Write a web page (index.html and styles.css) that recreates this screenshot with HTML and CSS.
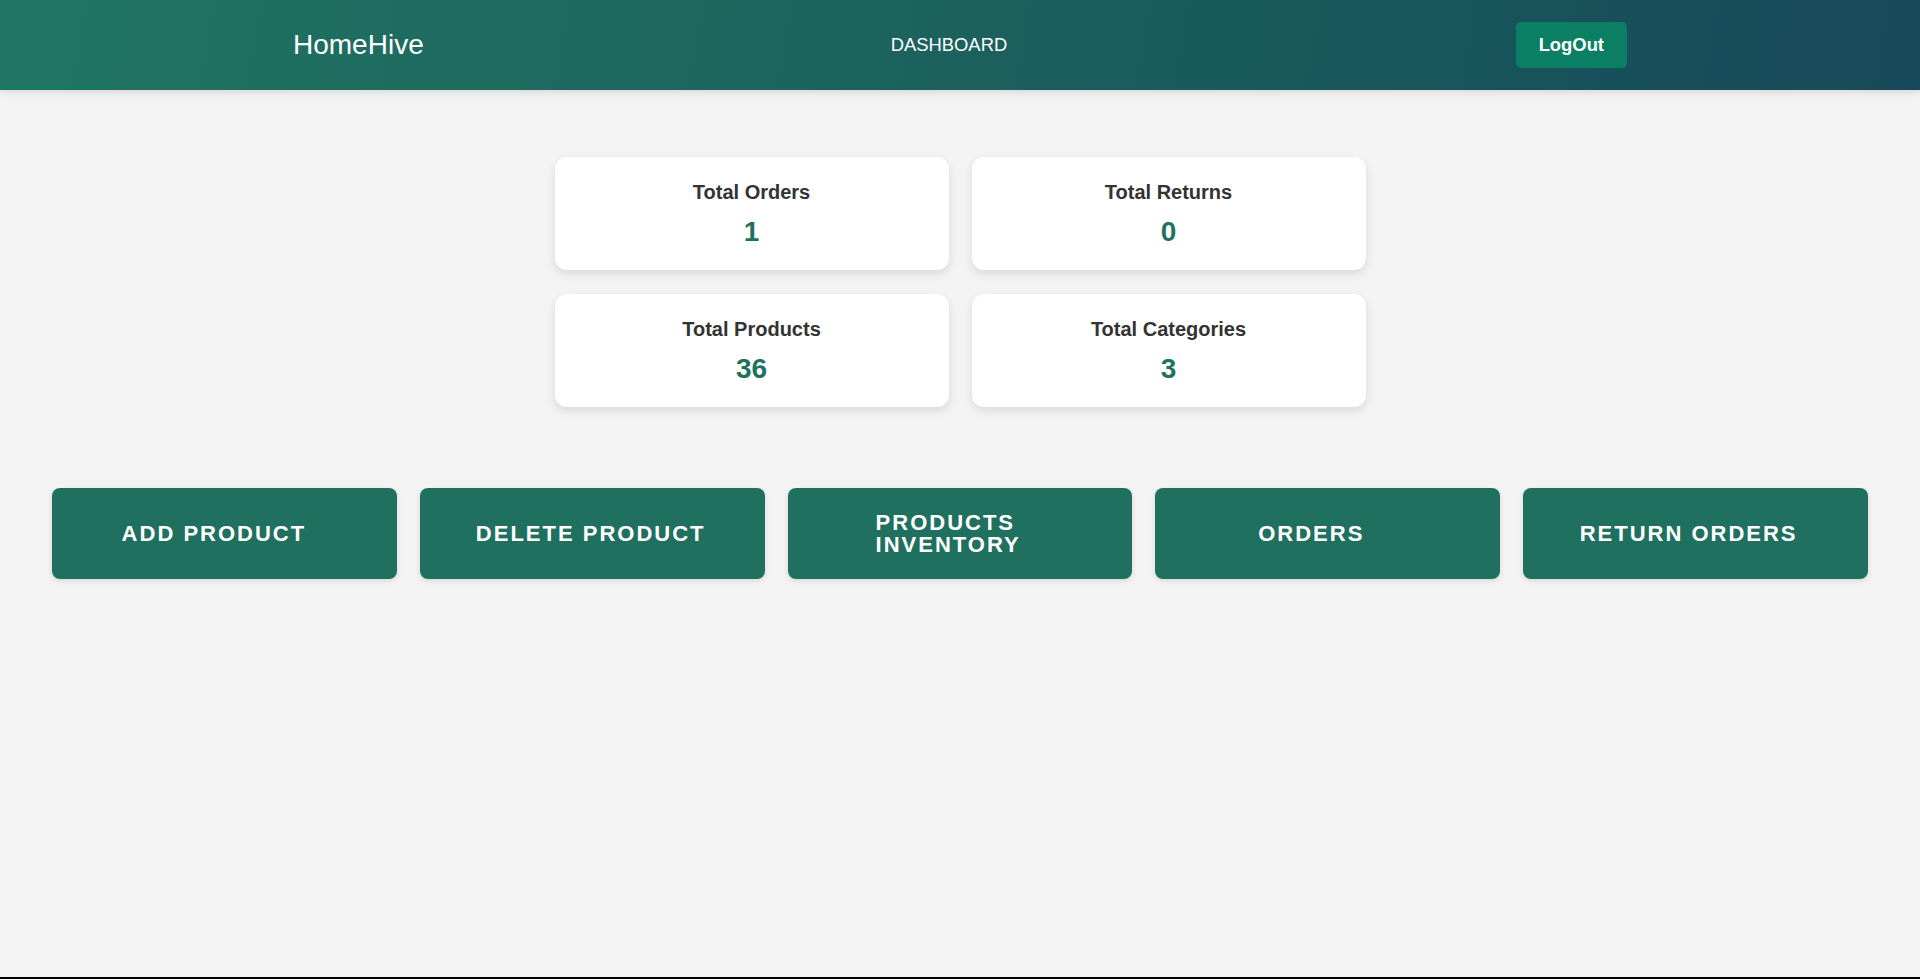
FILE: index.html
```html
<!DOCTYPE html>
<html lang="en">
<head>
<meta charset="utf-8">
<title>HomeHive Admin Dashboard</title>
<link rel="stylesheet" href="styles.css">
</head>
<body>
<div class="page">
  <header class="topbar">
    <div class="brand">HomeHive</div>
    <nav class="nav"><a class="nav-link" href="#">DASHBOARD</a></nav>
    <button class="logout" type="button">LogOut</button>
  </header>

  <main class="main">
    <section class="stats">
      <div class="stat-card">
        <h3 class="stat-title">Total Orders</h3>
        <p class="stat-value">1</p>
      </div>
      <div class="stat-card">
        <h3 class="stat-title">Total Returns</h3>
        <p class="stat-value">0</p>
      </div>
      <div class="stat-card">
        <h3 class="stat-title">Total Products</h3>
        <p class="stat-value">36</p>
      </div>
      <div class="stat-card">
        <h3 class="stat-title">Total Categories</h3>
        <p class="stat-value">3</p>
      </div>
    </section>

    <section class="actions">
      <a class="action action--add" href="#"><span class="action-label">ADD PRODUCT</span></a>
      <a class="action action--delete" href="#"><span class="action-label">DELETE PRODUCT</span></a>
      <a class="action action--inventory" href="#"><span class="action-label">PRODUCTS INVENTORY</span></a>
      <a class="action action--orders" href="#"><span class="action-label">ORDERS</span></a>
      <a class="action action--returns" href="#"><span class="action-label">RETURN ORDERS</span></a>
    </section>
  </main>

  <footer class="footer"></footer>
</div>
</body>
</html>
```

FILE: styles.css
```css
* {
  box-sizing: border-box;
}

html, body {
  margin: 0;
  padding: 0;
}

body {
  background: #f3f3f3;
  font-family: "Liberation Sans", Arial, Helvetica, sans-serif;
  color: #333;
}

.page {
  min-height: 100vh;
  display: flex;
  flex-direction: column;
}

/* Header */
.topbar {
  height: 90px;
  display: flex;
  align-items: center;
  padding: 0 293px 0 293px;
  background: linear-gradient(100deg, #1f7562 0%, #1d655e 40%, #195a5c 65%, #174859 100%);
  box-shadow: 0 2px 8px rgba(0, 0, 0, 0.12);
  color: #fff;
}

.brand {
  font-size: 28px;
  line-height: 1.15;
  color: #fff;
}

.nav {
  margin-left: 467px;
}

.nav-link {
  color: #fff;
  text-decoration: none;
  font-size: 18.4px;
  line-height: 1.15;
}

.logout {
  margin-left: auto;
  background: #0b7f64;
  color: #fff;
  border: none;
  border-radius: 5px;
  padding: 12px 23px;
  font-family: inherit;
  font-size: 18.4px;
  font-weight: bold;
  line-height: 1.15;
  cursor: pointer;
}

/* Main */
.main {
  flex: 1;
}

.stats {
  display: grid;
  grid-template-columns: repeat(2, 394px);
  gap: 24px 23px;
  justify-content: center;
  margin-top: 67px;
}

.stat-card {
  background: #fff;
  border-radius: 12px;
  box-shadow: 0 4px 10px rgba(0, 0, 0, 0.1);
  padding: 24px 20px 22px;
  text-align: center;
}

.stat-title {
  margin: 0 0 12px;
  font-size: 20px;
  font-weight: bold;
  line-height: 1.15;
  color: #333;
}

.stat-value {
  margin: 0;
  font-size: 28px;
  font-weight: bold;
  line-height: 1.15;
  color: #1f7260;
}

.actions {
  display: grid;
  grid-template-columns: repeat(5, 1fr);
  gap: 23px;
  padding: 0 52px;
  margin-top: 81px;
}

.action {
  height: 91px;
  display: flex;
  align-items: center;
  justify-content: center;
  text-align: left;
  background: #1f705e;
  color: #fff;
  text-decoration: none;
  border-radius: 8px;
  box-shadow: 0 2px 5px rgba(0, 0, 0, 0.12);
  font-size: 22px;
  font-weight: bold;
  letter-spacing: 2px;
  line-height: 1;
}

.action--add {
  padding-right: 21px;
}

.action--delete {
  padding-right: 3px;
}

.action--inventory {
  padding: 0 88px;
}

.action--orders {
  padding-right: 33px;
}

.action--returns {
  padding-right: 14px;
}

.footer {
  height: 2px;
  background: #000;
}
```
